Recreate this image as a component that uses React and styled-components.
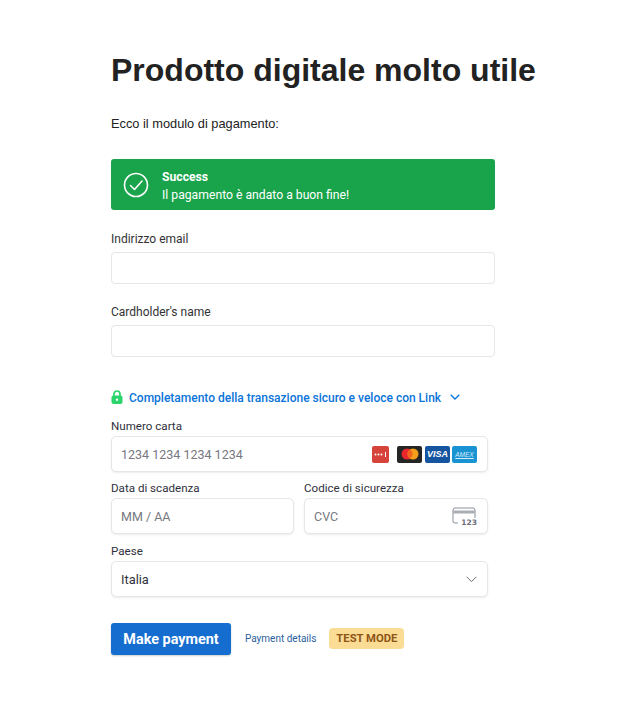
import React from 'react';
import styled, { createGlobalStyle } from 'styled-components';

const GlobalStyle = createGlobalStyle`
  html, body {
    margin: 0;
    padding: 0;
    background: #fff;
  }
  * {
    box-sizing: border-box;
  }
`;

export default function App() {
  return (
    <Page>
      <GlobalStyle />
      <Title>Prodotto digitale molto utile</Title>
      <Intro>Ecco il modulo di pagamento:</Intro>

      <Alert>
        <svg width="26" height="26" viewBox="0 0 26 26" fill="none" stroke="#fff" strokeWidth="1.6">
          <circle cx="13" cy="13" r="11.5" />
          <path d="M7.5 13.5l4 4 7.5-8.5" strokeLinecap="round" strokeLinejoin="round" />
        </svg>
        <AlertText>
          <strong>Success</strong>
          <span>Il pagamento è andato a buon fine!</span>
        </AlertText>
      </Alert>

      <PlainField>
        <PlainLabel>Indirizzo email</PlainLabel>
        <PlainInput />
      </PlainField>
      <PlainField>
        <PlainLabel>Cardholder's name</PlainLabel>
        <PlainInput />
      </PlainField>

      <LinkRow>
        <svg width="12" height="14" viewBox="0 0 12 14">
          <path d="M3 6V4a3 3 0 0 1 6 0v2" fill="none" stroke="#2bd56a" strokeWidth="1.7" />
          <rect x="0.5" y="5.5" width="11" height="8.5" rx="2" fill="#2bd56a" />
          <circle cx="6" cy="9.7" r="1.2" fill="#fff" />
        </svg>
        <span>Completamento della transazione sicuro e veloce con Link</span>
        <svg width="10" height="6" viewBox="0 0 10 6" fill="none" stroke="#0a74da" strokeWidth="1.3">
          <path d="M0.7 0.7L5 5l4.3-4.3" />
        </svg>
      </LinkRow>

      <StripeForm>
        <StripeField>
          <StripeLabel>Numero carta</StripeLabel>
          <StripeBox>
            <Placeholder>1234 1234 1234 1234</Placeholder>
            <CardIcons>
              <CardMark $bg="#d6433b" $w={17} $mr={6}>
                <svg width="13" height="5" viewBox="0 0 13 5" fill="#fff">
                  <circle cx="1.5" cy="2.5" r="1" />
                  <circle cx="4.5" cy="2.5" r="1" />
                  <circle cx="7.5" cy="2.5" r="1" />
                  <rect x="11" y="0" width="1" height="5" />
                </svg>
              </CardMark>
              <CardMark $bg="#252525" $w={25} $mr={1}>
                <svg width="18" height="12" viewBox="0 0 18 12">
                  <circle cx="6" cy="6" r="5.5" fill="#e8262d" />
                  <circle cx="12" cy="6" r="5.5" fill="#f79e1b" />
                  <path d="M9 1.4a5.5 5.5 0 0 1 0 9.2a5.5 5.5 0 0 1 0-9.2z" fill="#f2641e" />
                </svg>
              </CardMark>
              <CardMark $bg="#15559f" $w={25}>
                <VisaText>VISA</VisaText>
              </CardMark>
              <CardMark $bg="#1a93d2" $w={25}>
                <AmexText>AMEX</AmexText>
              </CardMark>
            </CardIcons>
          </StripeBox>
        </StripeField>

        <TwoColumns>
          <StripeField>
            <StripeLabel>Data di scadenza</StripeLabel>
            <StripeBox>
              <Placeholder>MM / AA</Placeholder>
            </StripeBox>
          </StripeField>
          <StripeField>
            <StripeLabel>Codice di sicurezza</StripeLabel>
            <StripeBox>
              <Placeholder>CVC</Placeholder>
              <CvcIcon>
                <svg width="25" height="19" viewBox="0 0 25 19" fill="none">
                  <path d="M6 16H3a2 2 0 0 1-2-2V3a2 2 0 0 1 2-2h18a2 2 0 0 1 2 2v8" stroke="#8a8f98" strokeWidth="1" />
                  <rect x="1" y="3.5" width="22" height="3" fill="#a9adb4" />
                </svg>
                <CvcDigits>123</CvcDigits>
              </CvcIcon>
            </StripeBox>
          </StripeField>
        </TwoColumns>

        <CountryField>
          <StripeLabel>Paese</StripeLabel>
          <StripeBox>
            <SelectValue>Italia</SelectValue>
            <svg width="11" height="7" viewBox="0 0 11 7" fill="none" stroke="#6d6e78" strokeWidth="1">
              <path d="M0.7 0.8L5.5 5.6l4.8-4.8" />
            </svg>
          </StripeBox>
        </CountryField>
      </StripeForm>

      <Actions>
        <PayButton>Make payment</PayButton>
        <DetailsLink>Payment details</DetailsLink>
        <TestBadge>TEST MODE</TestBadge>
      </Actions>
    </Page>
  );
}

const Page = styled.div`
  width: 626px;
  height: 724px;
  padding: 51px 0 0 111px;
  overflow: hidden;
  font-family: Roboto, 'Noto Sans', sans-serif;
`;

const Title = styled.h1`
  margin: 0;
  font-family: 'Liberation Sans', Arial, sans-serif;
  font-size: 32px;
  font-weight: 700;
  line-height: 39px;
  white-space: nowrap;
  color: #222;
`;

const Intro = styled.p`
  margin: 25px 0 0;
  font-family: 'Liberation Sans', Arial, sans-serif;
  font-size: 12.8px;
  line-height: 18px;
  color: #222;
`;

const Alert = styled.div`
  display: flex;
  align-items: center;
  gap: 13px;
  width: 384px;
  height: 51px;
  margin-top: 26px;
  padding-left: 12px;
  background: #19a44b;
  border-radius: 3px;
  color: #fff;
`;

const AlertText = styled.div`
  display: flex;
  flex-direction: column;
  padding-top: 2px;
  font-size: 12.2px;
  line-height: 18px;

  strong {
    font-weight: 700;
  }
`;

const PlainField = styled.div`
  width: 384px;
  margin-top: 20px;

  & + & {
    margin-top: 19px;
  }
`;

const PlainLabel = styled.div`
  height: 22px;
  padding-top: 1px;
  font-size: 12px;
  line-height: 16px;
  color: #333;
`;

const PlainInput = styled.div`
  height: 32px;
  background: #fff;
  border: 1px solid #e6e6e6;
  border-radius: 4px;
`;

const LinkRow = styled.div`
  display: flex;
  align-items: center;
  height: 18px;
  margin-top: 31px;
  font-size: 12px;
  font-weight: 500;
  color: #0a74da;

  span {
    margin: 0 9px 0 6px;
    padding-top: 1px;
  }
`;

const StripeForm = styled.div`
  display: flex;
  flex-direction: column;
  gap: 9px;
  width: 377px;
  margin-top: 13px;
`;

const TwoColumns = styled.div`
  display: grid;
  grid-template-columns: 183px 184px;
  gap: 10px;
`;

const StripeField = styled.div`
  display: flex;
  flex-direction: column;
  gap: 3px;
`;

const CountryField = styled(StripeField)`
  margin-top: 1px;
`;

const StripeLabel = styled.div`
  font-size: 11.6px;
  line-height: 14px;
  color: #30313d;
`;

const StripeBox = styled.div`
  display: flex;
  align-items: center;
  justify-content: space-between;
  height: 36px;
  padding: 0 10px 0 9px;
  background: #fff;
  border: 1px solid #e6e6e6;
  border-radius: 5px;
  box-shadow: 0 1px 2px rgba(0, 0, 0, 0.06), 0 2px 4px rgba(0, 0, 0, 0.02);
`;

const Placeholder = styled.span`
  font-size: 12.5px;
  color: #77787f;
`;

const SelectValue = styled.span`
  font-size: 12.8px;
  color: #30313d;
`;

const CardIcons = styled.div`
  display: flex;
  align-items: center;
  gap: 2px;
`;

const CardMark = styled.div`
  display: flex;
  align-items: center;
  justify-content: center;
  width: ${({ $w }) => $w}px;
  height: 17px;
  margin-right: ${({ $mr }) => $mr || 0}px;
  background: ${({ $bg }) => $bg};
  border-radius: 2px;
  overflow: hidden;
`;

const VisaText = styled.span`
  font-family: 'Liberation Sans', Arial, sans-serif;
  font-size: 9px;
  font-weight: 700;
  font-style: italic;
  color: #fff;
`;

const AmexText = styled.span`
  font-family: 'Liberation Sans', Arial, sans-serif;
  font-size: 6.5px;
  font-style: italic;
  color: #d4ecf8;
  text-decoration: underline;
`;

const CvcIcon = styled.div`
  position: relative;
  display: flex;
  width: 25px;
  height: 19px;
`;

const CvcDigits = styled.span`
  position: absolute;
  right: 0;
  bottom: -1px;
  font-family: 'DejaVu Sans', sans-serif;
  font-size: 7.5px;
  font-weight: 700;
  line-height: 8px;
  color: #6d6e78;
  background: #fff;
  padding-left: 1px;
`;

const Actions = styled.div`
  display: flex;
  align-items: center;
  margin-top: 26px;
`;

const PayButton = styled.button`
  width: 120px;
  height: 32px;
  padding: 0;
  background: #156dcf;
  border: 0;
  border-radius: 3px;
  box-shadow: 0 1px 2px rgba(0, 0, 0, 0.2);
  font-family: Roboto, sans-serif;
  font-size: 14.4px;
  font-weight: 700;
  color: #fff;
`;

const DetailsLink = styled.span`
  margin-left: 14px;
  margin-bottom: 1px;
  font-size: 10px;
  color: #2b5f9e;
`;

const TestBadge = styled.span`
  display: flex;
  align-items: center;
  justify-content: center;
  width: 75px;
  height: 21px;
  margin: 0 0 2px 13px;
  background: #fbdc95;
  border-radius: 4px;
  font-size: 11.3px;
  font-weight: 700;
  color: #8f5516;
`;
